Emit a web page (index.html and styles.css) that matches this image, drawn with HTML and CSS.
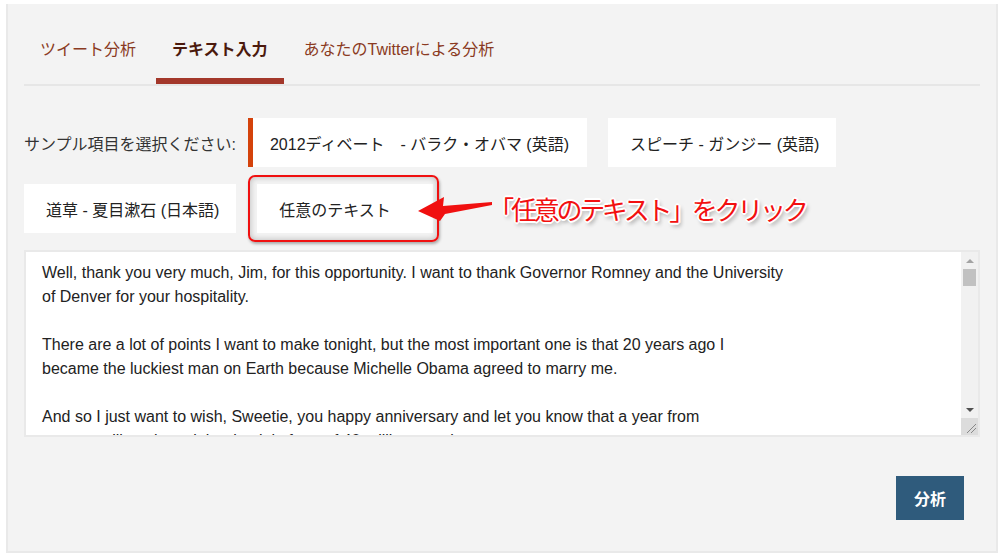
FILE: index.html
```html
<!DOCTYPE html>
<html>
  <head>
    <title>テキスト入力</title>
    <link rel="stylesheet" href="styles.css">
  </head>
  <body>
    <div class="panel">
      <ul class="tabs">
        <li class="tab">ツイート分析</li>
        <li class="tab active">テキスト入力</li>
        <li class="tab">あなたのTwitterによる分析</li>
      </ul>

      <div class="samples">
        <span class="sample-label">サンプル項目を選択ください:</span>
        <button class="sample selected">2012ディベート　- バラク・オバマ (英語)</button>
        <button class="sample">スピーチ - ガンジー (英語)</button>
        <button class="sample">道草 - 夏目漱石 (日本語)</button>
        <div class="highlight-wrap">
          <button class="sample free">任意のテキスト</button>
          <div class="highlight"></div>
        </div>
        <div class="callout">
          <svg class="arrow" width="76" height="28" viewBox="0 0 76 28">
            <polygon points="0,15 26,1 25,10 74,6 74,9 27,18 22,25" fill="#f01010"/>
          </svg>
          <span class="callout-text">「任意のテキスト」をクリック</span>
        </div>
      </div>

      <div class="text-box">
        <textarea class="input-text">Well, thank you very much, Jim, for this opportunity. I want to thank Governor Romney and the University
of Denver for your hospitality.

There are a lot of points I want to make tonight, but the most important one is that 20 years ago I
became the luckiest man on Earth because Michelle Obama agreed to marry me.

And so I just want to wish, Sweetie, you happy anniversary and let you know that a year from
now we will not be celebrating it in front of 40 million people.

You know, four years ago we went through the worst financial crisis since the Great Depression.</textarea>
        
        <div class="scrollbar">
          <div class="arrow-up"></div>
          <div class="thumb"></div>
          <div class="track"></div>
          <div class="arrow-down"></div>
          <div class="resizer">
            <svg width="17" height="17" viewBox="0 0 17 17">
              <line x1="6" y1="15" x2="15" y2="6" stroke="#888" stroke-width="1"/>
              <line x1="10" y1="15" x2="15" y2="10" stroke="#888" stroke-width="1"/>
            </svg>
          </div>
        </div>
      </div>

      <div class="actions">
        <button class="btn">分析</button>
      </div>
    </div>
  </body>
</html>
```

FILE: styles.css
```css
body {
  margin: 4px 7px 0 6px;
  font-family: "Liberation Sans", Arial, "Noto Sans CJK JP", sans-serif;
  font-size: 16px;
  color: #333;
  background: white;
}
.panel {
  background: #f3f3f3;
  border: 2px solid #e9e9e9;
  border-top: none;
  padding: 16px 16px 31px 16px;
}
.tabs {
  list-style: none;
  margin: 0;
  padding: 0;
  display: flex;
  border-bottom: 2px solid #e6e6e6;
}
.tab {
  padding: 18px 16px 16px;
  line-height: 24px;
  margin-right: 4px;
  color: #8a3a22;
  border-bottom: 6px solid transparent;
}
.tab.active {
  color: #4b190c;
  font-weight: bold;
  border-bottom-color: #a3372a;
}
.samples {
  position: relative;
  display: flex;
  flex-wrap: wrap;
  align-items: center;
  margin-top: 32px;
  row-gap: 17px;
}
.sample-label {
  margin-right: 12px;
  color: #333;
}
.sample {
  font-family: inherit;
  font-size: 16px;
  color: #222;
  background: white;
  border: none;
  border-left: 5px solid transparent;
  height: 49px;
  padding: 0 17px 0 17px;
  margin-right: 21px;
}
.sample.selected {
  border-left-color: #d4420b;
  padding-right: 18px;
}
.sample.free {
  width: 176px;
  text-align: left;
  margin-right: 0;
}
.highlight-wrap {
  position: relative;
}
.highlight {
  position: absolute;
  left: -9px;
  top: -9px;
  right: -6px;
  bottom: -9px;
  border: 2px solid #f01010;
  border-radius: 7px;
  box-shadow: inset 0 0 6px rgba(0, 0, 0, 0.25), 1px 2px 3px rgba(0, 0, 0, 0.3);
}
.callout {
  display: flex;
  align-items: center;
  margin-left: -15px;
  position: relative;
  z-index: 1;
}
.arrow {
  margin-top: 2px;
}
.callout-text {
  display: inline-block;
  margin-left: -6px;
  font-size: 26px;
  color: #f21010;
  letter-spacing: -3.3px;
  text-shadow: -1px -1px 0 #fff, 1px -1px 0 #fff, -1px 1px 0 #fff, 1px 1px 0 #fff,
    2px 0 0 #fff, -2px 0 0 #fff, 0 2px 0 #fff, 0 -2px 0 #fff,
    2px 3px 4px rgba(0, 0, 0, 0.45);
}
.text-box {
  position: relative;
  margin-top: 17px;
}
.input-text {
  display: block;
  box-sizing: border-box;
  width: 100%;
  height: 187px;
  padding: 9px 34px 0 16px;
  border: 2px solid #e9e9e9;
  background: white;
  color: #222;
  font-family: "Liberation Sans", Arial, sans-serif;
  font-size: 16px;
  line-height: 24px;
  overflow: hidden;
  resize: none;
  white-space: pre;
}
.scrollbar {
  position: absolute;
  top: 2px;
  right: 2px;
  bottom: 2px;
  width: 17px;
  display: flex;
  flex-direction: column;
  background: #f1f1f1;
}
.arrow-up,
.arrow-down {
  height: 17px;
  display: flex;
  align-items: center;
  justify-content: center;
}
.arrow-up::before,
.arrow-down::before {
  content: "";
  border-left: 4px solid transparent;
  border-right: 4px solid transparent;
}
.arrow-up::before {
  border-bottom: 4px solid #a3a3a3;
}
.arrow-down::before {
  border-top: 4px solid #505050;
}
.thumb {
  height: 17px;
  margin: 0 2px;
  background: #c1c1c1;
}
.track {
  flex: 1;
}
.resizer {
  height: 17px;
  background: #dcdcdc;
}
.resizer svg {
  display: block;
}
.actions {
  display: flex;
  justify-content: flex-end;
  margin-top: 39px;
}
.btn {
  background: #2f5b7c;
  color: white;
  font-family: inherit;
  font-size: 16px;
  font-weight: bold;
  width: 68px;
  height: 44px;
  border: none;
  margin-right: 16px;
}
```
